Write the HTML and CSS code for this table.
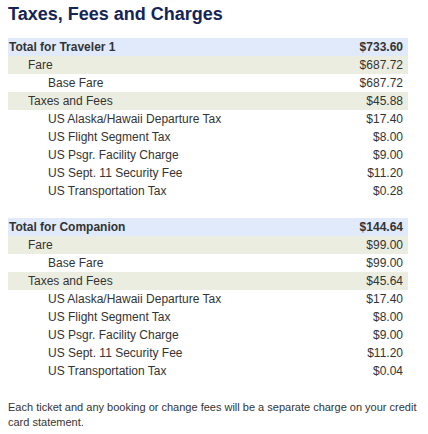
FILE: index.html
```html
<!DOCTYPE html>
<html>
<head>
<meta charset="utf-8">
<link rel="stylesheet" href="styles.css">
</head>
<body>
<div class="page">
  <h1 class="title">Taxes, Fees and Charges</h1>

  <table class="charges">
    <tr class="total"><td>Total for Traveler 1</td><td class="amt">$733.60</td></tr>
    <tr class="band"><td class="l1">Fare</td><td class="amt">$687.72</td></tr>
    <tr><td class="l2">Base Fare</td><td class="amt">$687.72</td></tr>
    <tr class="band"><td class="l1">Taxes and Fees</td><td class="amt">$45.88</td></tr>
    <tr><td class="l2">US Alaska/Hawaii Departure Tax</td><td class="amt">$17.40</td></tr>
    <tr><td class="l2">US Flight Segment Tax</td><td class="amt">$8.00</td></tr>
    <tr><td class="l2">US Psgr. Facility Charge</td><td class="amt">$9.00</td></tr>
    <tr><td class="l2">US Sept. 11 Security Fee</td><td class="amt">$11.20</td></tr>
    <tr><td class="l2">US Transportation Tax</td><td class="amt">$0.28</td></tr>
  </table>

  <table class="charges second">
    <tr class="total"><td>Total for Companion</td><td class="amt">$144.64</td></tr>
    <tr class="band"><td class="l1">Fare</td><td class="amt">$99.00</td></tr>
    <tr><td class="l2">Base Fare</td><td class="amt">$99.00</td></tr>
    <tr class="band"><td class="l1">Taxes and Fees</td><td class="amt">$45.64</td></tr>
    <tr><td class="l2">US Alaska/Hawaii Departure Tax</td><td class="amt">$17.40</td></tr>
    <tr><td class="l2">US Flight Segment Tax</td><td class="amt">$8.00</td></tr>
    <tr><td class="l2">US Psgr. Facility Charge</td><td class="amt">$9.00</td></tr>
    <tr><td class="l2">US Sept. 11 Security Fee</td><td class="amt">$11.20</td></tr>
    <tr><td class="l2">US Transportation Tax</td><td class="amt">$0.04</td></tr>
  </table>

  <p class="note">Each ticket and any booking or change fees will be a separate charge on your credit card statement.</p>
</div>
</body>
</html>
```
FILE: styles.css
```css
html, body {
  margin: 0;
  padding: 0;
  background: #ffffff;
}
.page {
  padding: 4px 8px 0 8px;
  font-family: "Liberation Sans", Arial, sans-serif;
  color: #333333;
}
.title {
  margin: 0 0 14px 0;
  font-size: 18px;
  line-height: 20px;
  font-weight: bold;
  color: #142456;
}
.charges {
  width: 400px;
  border-collapse: collapse;
  font-size: 12px;
}
.charges td {
  height: 18px;
  padding: 0 5px 0 1px;
  line-height: 18px;
  white-space: nowrap;
}
.charges .amt {
  text-align: right;
}
.charges .total td {
  background: #e0eafb;
  font-weight: bold;
}
.charges .band td {
  background: #ecede1;
}
.charges .l1 {
  padding-left: 20px;
}
.charges .l2 {
  padding-left: 40px;
}
.second {
  margin-top: 18px;
}
.note {
  margin: 20px 0 0 0;
  font-size: 11px;
  line-height: 15px;
  width: 420px;
}
```
